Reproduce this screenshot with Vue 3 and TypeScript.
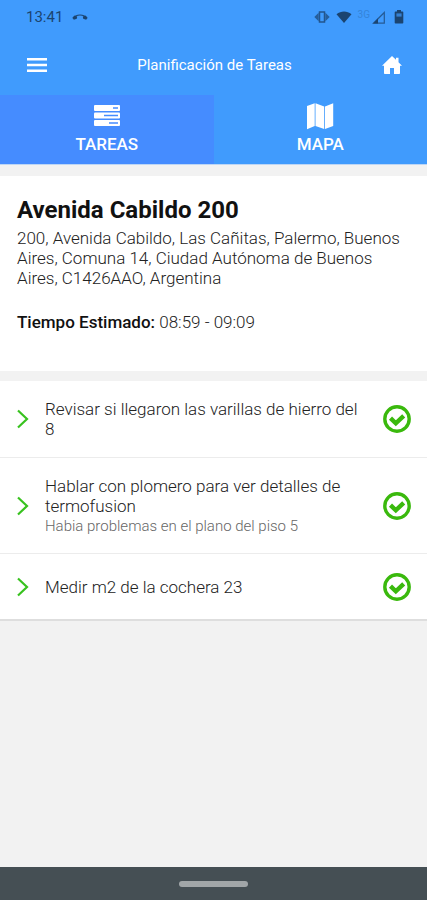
<script setup lang="ts">
import { ref } from 'vue'

interface Task {
  id: number
  title: string
  note?: string
}

type Tab = 'tareas' | 'mapa'

const activeTab = ref<Tab>('tareas')

const tasks: Task[] = [
  { id: 1, title: 'Revisar si llegaron las varillas de hierro del 8' },
  {
    id: 2,
    title: 'Hablar con plomero para ver detalles de termofusion',
    note: 'Habia problemas en el plano del piso 5',
  },
  { id: 3, title: 'Medir m2 de la cochera 23' },
]
</script>

<template>
  <div class="screen">
    <div class="status">
      <span class="clock">13:41</span>
      <svg class="call" width="16" height="8" viewBox="0 0 16 8" aria-hidden="true">
        <path d="M1 5.5C4 .8 12 .8 15 5.5" fill="none" stroke="currentColor" stroke-width="1.2" />
        <path d="M.5 4.5 2.6 2.4 5.2 3.6 4.8 5.8 1.8 6.8ZM15.5 4.5 13.4 2.4 10.8 3.6 11.2 5.8 14.2 6.8Z" fill="currentColor" />
      </svg>
      <div class="indicators">
        <svg width="16" height="12" viewBox="0 0 16 12" aria-hidden="true">
          <path d="M5.5 1h5v10h-5z" fill="none" stroke="currentColor" stroke-width="1.5" opacity=".8" />
          <path d="M4.6 1.8.3 6l4.300 4.200ZM11.400 1.800 15.700 6l-4.300 4.200Z" fill="currentColor" opacity=".7" />
        </svg>
        <svg class="wifi" width="16" height="12" viewBox="0 0 16 12" aria-hidden="true">
          <path d="M.5 3.200C5-.4 11-.4 15.500 3.200L8 12Z" fill="currentColor" />
        </svg>
        <span class="network">3G</span>
        <svg class="signal" width="14" height="13" viewBox="0 0 14 13" aria-hidden="true">
          <path d="M12.300 1.500V12.200H1.500Z" fill="none" stroke="currentColor" stroke-width="1.200" opacity=".75" />
          <path d="M6 7.500V12.500H1Z" fill="currentColor" />
        </svg>
        <svg class="battery" width="10" height="14" viewBox="0 0 10 14" aria-hidden="true">
          <path d="M3 0h4v1.500h1.500q.8 0 .8.800v10.400q0 .8-.8.800h-7q-.8 0-.8-.8V2.300q0-.8.8-.8H3Z" fill="currentColor" />
          <path d="M2.400 3.400h5.200v3.200H2.400z" fill="#409bfd" opacity=".7" />
        </svg>
      </div>
    </div>

    <header class="bar">
      <button class="icon-button" type="button" aria-label="Menú">
        <svg width="20" height="14" viewBox="0 0 20 14" aria-hidden="true">
          <path d="M0 1.200h20M0 7h20M0 12.800h20" stroke="currentColor" stroke-width="2.400" />
        </svg>
      </button>
      <h1>Planificación de Tareas</h1>
      <button class="icon-button" type="button" aria-label="Inicio">
        <svg width="20" height="18" viewBox="0 0 20 18" aria-hidden="true">
          <path d="M10 0 14 3.700V1.800H16.500V6.200L20 9.800H18V17.200q0 .8-.8.800H12V12H8V18H2.800q-.8 0-.8-.8V9.800H0Z" fill="currentColor" />
        </svg>
      </button>
    </header>

    <nav class="tabs" aria-label="Vistas">
      <button
        type="button"
        class="tab"
        :class="{ active: activeTab === 'tareas' }"
        @click="activeTab = 'tareas'"
      >
        <svg width="28" height="28" viewBox="0 0 28 28" aria-hidden="true">
          <rect x="1" y="3" width="26" height="6" rx="1" fill="currentColor" />
          <rect x="1" y="10.500" width="26" height="6" rx="1" fill="currentColor" />
          <rect x="1" y="18" width="26" height="6" rx="1" fill="currentColor" />
          <path d="M20 6h5M11 13.500h14M16 21h9" stroke="#458cff" stroke-width="1.600" />
        </svg>
        <span>TAREAS</span>
      </button>
      <button
        type="button"
        class="tab"
        :class="{ active: activeTab === 'mapa' }"
        @click="activeTab = 'mapa'"
      >
        <svg width="28" height="28" viewBox="0 0 28 28" aria-hidden="true">
          <path d="M1 4 8.700 1.200V24L1 27.200ZM9.500 1.200 18.200 4.500V27L9.500 24ZM19 4.500 27.200 1.200V24L19 27Z" fill="currentColor" />
        </svg>
        <span>MAPA</span>
      </button>
    </nav>

    <main>
      <section class="place">
        <h2>Avenida Cabildo 200</h2>
        <p>200, Avenida Cabildo, Las Cañitas, Palermo, Buenos Aires, Comuna 14, Ciudad Autónoma de Buenos Aires, C1426AAO, Argentina</p>
        <p class="time"><strong>Tiempo Estimado:</strong> 08:59 - 09:09</p>
      </section>

      <ul class="tasks">
        <li v-for="task in tasks" :key="task.id" class="task">
          <svg class="chevron" width="12" height="20" viewBox="0 0 12 20" aria-hidden="true">
            <path d="M1 1.500 10 10 1 18.500" fill="none" stroke="currentColor" stroke-width="2.200" />
          </svg>
          <div class="text">
            <h3>{{ task.title }}</h3>
            <p v-if="task.note">{{ task.note }}</p>
          </div>
          <button class="check" type="button" :aria-label="`Completar: ${task.title}`">
            <svg width="28" height="28" viewBox="0 0 28 28" aria-hidden="true">
              <circle cx="14" cy="14" r="12.200" fill="none" stroke="currentColor" stroke-width="3.400" />
              <path d="M7.500 13.200 12.800 18.300 20.700 10.800" fill="none" stroke="currentColor" stroke-width="4.400" />
            </svg>
          </button>
        </li>
      </ul>
    </main>

    <footer class="system-nav"><span class="pill"></span></footer>
  </div>
</template>

<style>
body {
  margin: 0;
}
</style>

<style scoped>
.screen {
  display: flex;
  flex-direction: column;
  min-height: 100vh;
  background: #f2f2f2;
  color: #222;
  font-family: Roboto, "Liberation Sans", sans-serif;
  font-size: 17px;
  line-height: 20px;
}

h1,
h2,
h3,
p,
ul {
  margin: 0;
  padding: 0;
}

button {
  padding: 0;
  border: 0;
  background: none;
  color: inherit;
  font: inherit;
  cursor: pointer;
}

svg {
  display: block;
}

.status {
  display: flex;
  align-items: center;
  height: 34px;
  padding: 0 23px 0 26px;
  background: #409bfd;
  color: #1b4470;
}

.clock {
  font-size: 15px;
}

.call {
  margin-left: 9px;
}

.indicators {
  display: flex;
  align-items: center;
  margin-left: auto;
}

.wifi {
  margin-left: 6px;
}

.network {
  margin: 0 2px 4px 6px;
  color: #3484d9;
  font-size: 10px;
  line-height: 12px;
}

.battery {
  margin-left: 8px;
}

.bar {
  display: flex;
  align-items: center;
  justify-content: space-between;
  height: 61px;
  padding: 0 17px 0 19px;
  background: #409bfd;
  color: #fff;
}

.bar h1 {
  font-size: 15px;
  font-weight: 400;
}

.icon-button {
  display: grid;
  place-items: center;
  width: 36px;
  height: 36px;
}

.tabs {
  display: grid;
  grid-template-columns: 1fr 1fr;
  background: #409bfd;
  color: #fff;
  border-bottom: 1px solid #bdd6f5;
}

.tab {
  display: flex;
  flex-direction: column;
  align-items: center;
  gap: 4px;
  padding: 7px 0 10px;
  font-size: 17px;
  font-weight: 500;
}

.tab.active {
  background: #458cff;
}

main {
  flex: 1;
  padding-top: 11px;
}

.place {
  padding: 20px 17px 39px;
  background: #fff;
}

.place h2 {
  padding-bottom: 4px;
  color: #111;
  font-size: 24px;
  font-weight: 700;
  line-height: 28px;
}

.place p {
  font-size: 17px;
  font-weight: 300;
}

.place .time {
  padding-top: 24px;
}

.time strong {
  color: #111;
  font-weight: 500;
}

.tasks {
  margin-top: 10px;
  background: #fff;
  border-bottom: 2px solid #dedede;
  list-style: none;
}

.task {
  display: flex;
  align-items: center;
  gap: 16px;
  min-height: 65px;
  padding: 0 16px 0 17px;
}

.task + .task {
  border-top: 1px solid #ececec;
}

.chevron {
  flex: none;
  color: #38c21f;
}

.text {
  flex: 1;
  padding: 18px 0;
}

.text h3 {
  font-size: 17px;
  font-weight: 300;
}

.text p {
  padding-top: 2px;
  color: #666;
  font-size: 15px;
  font-weight: 300;
  line-height: 17px;
}

.check {
  flex: none;
  color: #3ab90d;
}

.system-nav {
  display: grid;
  place-items: center;
  height: 33px;
  background: #454f54;
}

.pill {
  width: 69px;
  height: 6px;
  border-radius: 3px;
  background: #a1a6a8;
}
</style>
